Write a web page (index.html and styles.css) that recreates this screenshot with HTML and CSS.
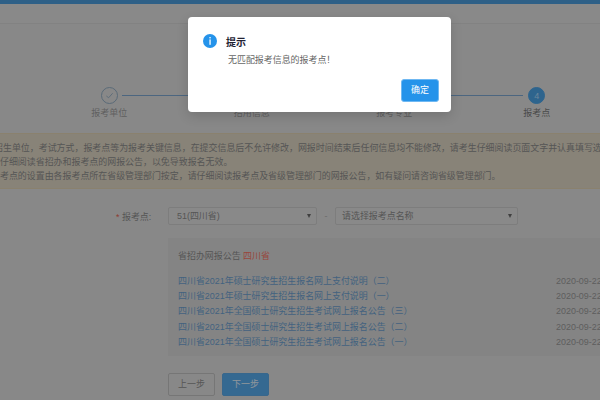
FILE: index.html
```html
<!DOCTYPE html>
<html lang="zh-CN">
<head>
  <meta charset="UTF-8" />
  <title>报考点</title>
  <link rel="stylesheet" href="styles.css">
</head>
<body>
  <div class="page">
    <div class="topbar"></div>
    <div class="subbar"></div>

    <!-- Steps -->
    <div class="steps">
      <div class="step done">
        <div class="circle">
          <svg width="9" height="9" viewBox="0 0 10 10"><path d="M1.5 5.5 L4 7.5 L8.5 2.5" fill="none" stroke="#8fa8be" stroke-width="1"/></svg>
        </div>
        <div class="step-name">报考单位</div>
      </div>
      <div class="step done">
        <div class="circle"></div>
        <div class="step-name">招用信息</div>
      </div>
      <div class="step done">
        <div class="circle"></div>
        <div class="step-name">报考专业</div>
      </div>
      <div class="step active">
        <div class="circle">4</div>
        <div class="step-name">报考点</div>
      </div>
    </div>

    <!-- Notice -->
    <div class="notice">
      <p class="line-a">招生单位，考试方式，报考点等为报考关键信息，在提交信息后不允许修改，网报时间结束后任何信息均不能修改，请考生仔细阅读页面文字并认真填写选择。</p>
      <p class="line-b">请仔细阅读省招办和报考点的网报公告，以免导致报名无效。</p>
      <p class="line-b">报考点的设置由各报考点所在省级管理部门按定，请仔细阅读报考点及省级管理部门的网报公告，如有疑问请咨询省级管理部门。</p>
    </div>

    <!-- Form -->
    <div class="form-row">
      <div class="form-label"><span class="star">*</span> 报考点:</div>
      <div class="select select-province">51(四川省)<span class="arrow"></span></div>
      <div class="dash">-</div>
      <div class="select select-point">请选择报考点名称<span class="arrow"></span></div>
    </div>

    <div class="board">
      <div class="board-title">省招办网报公告 <span class="red">四川省</span></div>
      <div class="board-row"><a>四川省2021年硕士研究生招生报名网上支付说明（二）</a><span class="date">2020-09-22</span></div>
      <div class="board-row"><a>四川省2021年硕士研究生招生报名网上支付说明（一）</a><span class="date">2020-09-22</span></div>
      <div class="board-row"><a>四川省2021年全国硕士研究生招生考试网上报名公告（三）</a><span class="date">2020-09-22</span></div>
      <div class="board-row"><a>四川省2021年全国硕士研究生招生考试网上报名公告（二）</a><span class="date">2020-09-22</span></div>
      <div class="board-row"><a>四川省2021年全国硕士研究生招生考试网上报名公告（一）</a><span class="date">2020-09-22</span></div>
    </div>

    <div class="actions">
      <div class="btn btn-prev">上一步</div>
      <div class="btn btn-next">下一步</div>
    </div>
  </div>

  <!-- Dialog -->
  <div class="overlay">
    <div class="dialog">
      <div class="dialog-head">
        <svg class="info" width="14" height="14" viewBox="0 0 14 14">
          <circle cx="7" cy="7" r="7" fill="#2593ea"/>
          <rect x="6.4" y="3" width="1.3" height="1.4" fill="#fff"/>
          <rect x="6.4" y="5.4" width="1.3" height="5.4" fill="#fff"/>
        </svg>
        <span class="dialog-title">提示</span>
      </div>
      <div class="dialog-msg">无匹配报考信息的报考点！</div>
      <div class="dialog-foot"><div class="dialog-ok">确定</div></div>
    </div>
  </div>
</body>
</html>
```

FILE: styles.css
```css
html, body { margin: 0; height: 100%; overflow: hidden; }
body { width: 600px; height: 400px; background: #d8d8d8; font-family: "Liberation Sans", "Noto Sans CJK SC", sans-serif; font-size: 8.95px; color: #888; position: relative; }
.page { width: 600px; height: 400px; overflow: hidden; }
.topbar { height: 4px; background: #4a98d6; }
.subbar { height: 19px; background: #dadada; border-bottom: 1px solid #cfcfcf; }

.steps { display: grid; grid-template-columns: repeat(4, 142.5px); margin: 63px 0 0 38px; width: 570px; }
.step { position: relative; display: flex; flex-direction: column; align-items: center; }
.step:not(:last-child)::after { content: ""; position: absolute; left: 84px; top: 8px; width: 116px; height: 1px; background: #79a2cb; }
.circle { width: 15px; height: 15px; border: 1px solid #8fa8be; border-radius: 50%; display: flex; align-items: center; justify-content: center; color: #a9d3f5; font-size: 9px; }
.step.active .circle { background: #4a9fe0; border-color: #4a9fe0; }
.step-name { margin-top: 2px; font-size: 9px; line-height: 14px; color: #999; }
.step.active .step-name { color: #767676; }

.notice { margin-top: 13px; height: 56px; box-sizing: border-box; padding-top: 7px; background: #d8d0be; border-top: 1px solid #dbcdae; border-bottom: 1px solid #dbcdae; }
.notice p { margin: 0; line-height: 14px; white-space: nowrap; color: #888; }
.notice .line-a { margin-left: -6px; }
.notice .line-b { margin-left: -9px; }

.form-row { display: flex; align-items: center; margin: 18px 0 0 116px; height: 18px; }
.form-label { width: 52px; color: #888; }
.star { color: #e0604f; }
.select { position: relative; height: 18px; box-sizing: border-box; border: 1px solid #c6c6c6; border-radius: 2px; background: #dadada; line-height: 16px; color: #888; }
.select-province { width: 149px; padding-left: 8px; }
.select-point { width: 183px; padding-left: 6px; }
.dash { width: 18px; text-align: center; color: #aaa; }
.arrow { position: absolute; right: 5px; top: 6px; border: 2.5px solid transparent; border-top: 4px solid #666; border-bottom: 0; }

.board { margin: 13px 0 0 168px; height: 118px; box-sizing: border-box; padding: 11px 0 0 10px; background: #d2d2d2; }
.board-title { line-height: 14px; margin-bottom: 11px; color: #888; }
.red { color: #f0705f; }
.board-row { display: flex; justify-content: space-between; height: 15.2px; line-height: 15.2px; white-space: nowrap; }
.board-row a { color: #6a9cca; }
.date { width: 44px; overflow: hidden; color: #959595; }

.actions { display: flex; gap: 7px; margin: 17px 0 0 168px; }
.btn { width: 47px; height: 23px; box-sizing: border-box; border-radius: 2px; line-height: 21px; text-align: center; }
.btn-prev { border: 1px solid #bbb; color: #888; }
.btn-next { border: 1px solid #5aa4de; background: #55a6e6; color: #e4eef6; }

.overlay { position: absolute; left: 0; top: 0; width: 600px; height: 400px; background: rgba(0,0,0,0.37); }
.dialog { position: absolute; left: 188px; top: 17px; width: 263px; height: 95px; box-sizing: border-box; padding: 17px 12px 0 15px; background: #fff; border-radius: 4px; box-shadow: 0 4px 12px rgba(0,0,0,0.15); }
.dialog-head { display: flex; align-items: center; gap: 9px; height: 14px; }
.info { flex: none; }
.dialog-title { font-size: 10px; font-weight: 700; color: #223; }
.dialog-msg { margin: 5px 0 0 25px; line-height: 14px; color: #666; }
.dialog-foot { display: flex; justify-content: flex-end; margin-top: 12px; }
.dialog-ok { width: 38px; height: 23px; border: 1px solid #6fb8f2; box-sizing: border-box; border-radius: 3px; background: #2593ea; color: #fff; line-height: 21px; text-align: center; }
```
